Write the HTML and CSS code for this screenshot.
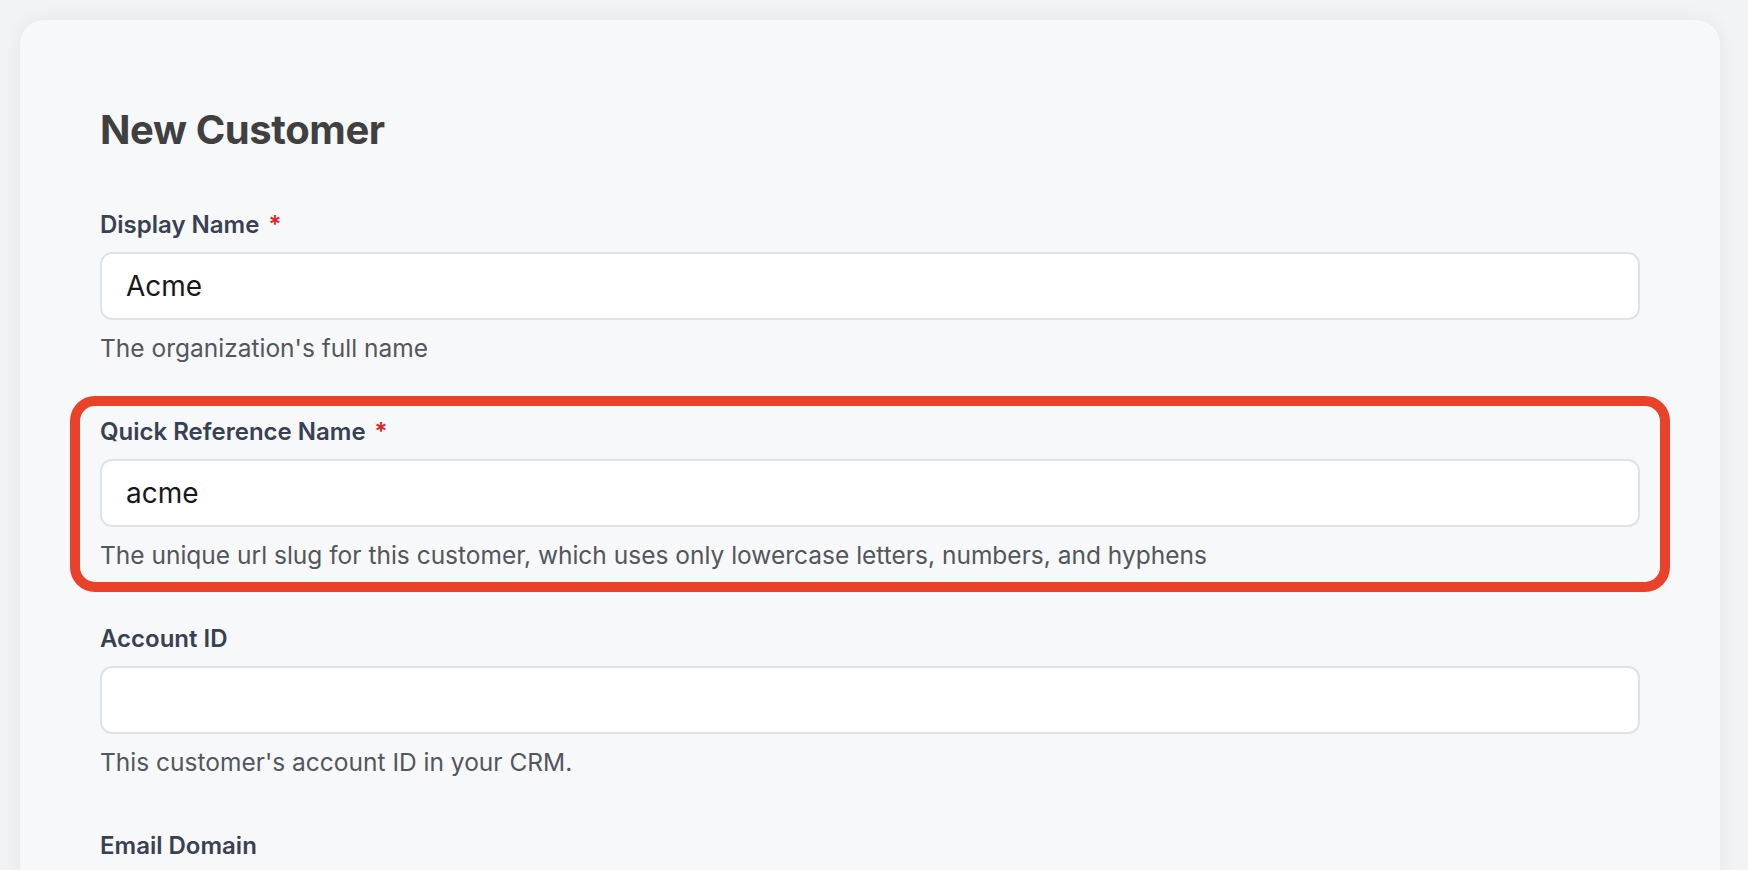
FILE: index.html
```html
<!DOCTYPE html>
<html lang="en">
<head>
  <meta charset="UTF-8" />
  <title>New Customer</title>
  <link rel="stylesheet" href="styles.css">
</head>
<body>
  <main class="card">
    <h1 class="card-title">New Customer</h1>

    <form class="customer-form">
      <div class="field">
        <label class="field-label" for="displayName">Display Name<span class="required">*</span></label>
        <input class="field-input" type="text" id="displayName" value="Acme" />
        <p class="field-help">The organization's full name</p>
      </div>

      <!-- highlighted field -->
      <div class="field field-highlight">
        <label class="field-label" for="slug">Quick Reference Name<span class="required">*</span></label>
        <input class="field-input" type="text" id="slug" value="acme" />
        <p class="field-help">The unique url slug for this customer, which uses only lowercase letters, numbers, and hyphens</p>
      </div>

      <div class="field">
        <label class="field-label" for="accountId">Account ID</label>
        <input class="field-input" type="text" id="accountId" value="" />
        <p class="field-help">This customer's account ID in your CRM.</p>
      </div>

      <div class="field">
        <label class="field-label" for="emailDomain">Email Domain</label>
        <input class="field-input" type="text" id="emailDomain" value="" />
      </div>
    </form>
  </main>
</body>
</html>
```

FILE: styles.css
```css
/* Basic reset */
* {
  margin: 0;
  padding: 0;
  box-sizing: border-box;
}

body {
  background-color: #f2f3f5;
  font-family: Inter, "Noto Sans", sans-serif;
  color: #374151;
  height: 870px;
  overflow: hidden;
}

/* Main card */
.card {
  margin: 20px 28px 0 20px;
  width: 1700px;
  min-height: 1000px;
  padding: 86px 80px 80px;
  background-color: #f7f8fa;
  border-radius: 24px;
  box-shadow: 0 0 20px rgba(17, 24, 39, 0.06);
}

.card-title {
  font-size: 40px;
  line-height: 48px;
  font-weight: 700;
  letter-spacing: -0.01em;
  color: #404040;
  margin-bottom: 55px;
}

/* Form fields */
.customer-form {
  display: flex;
  flex-direction: column;
  gap: 52px;
}

.field {
  display: flex;
  flex-direction: column;
}

.field-label {
  font-size: 24px;
  line-height: 32px;
  font-weight: 600;
  color: #374151;
  margin-bottom: 11px;
}

.required {
  color: #dc2626;
  margin-left: 9px;
}

.field-input {
  height: 68px;
  width: 100%;
  padding: 0 24px;
  font-family: inherit;
  font-size: 28px;
  color: #18181b;
  background-color: #ffffff;
  border: 2px solid #dfe2e7;
  border-radius: 12px;
  outline: none;
}

.field-help {
  margin-top: 12px;
  font-size: 24.5px;
  line-height: 32px;
  color: #52565d;
}

/* Red outline around the slug field */
.field-highlight {
  margin: -20px -30px -21px;
  padding: 10px 20px 11px;
  border: 10px solid #e9412a;
  border-radius: 25px;
}
```
